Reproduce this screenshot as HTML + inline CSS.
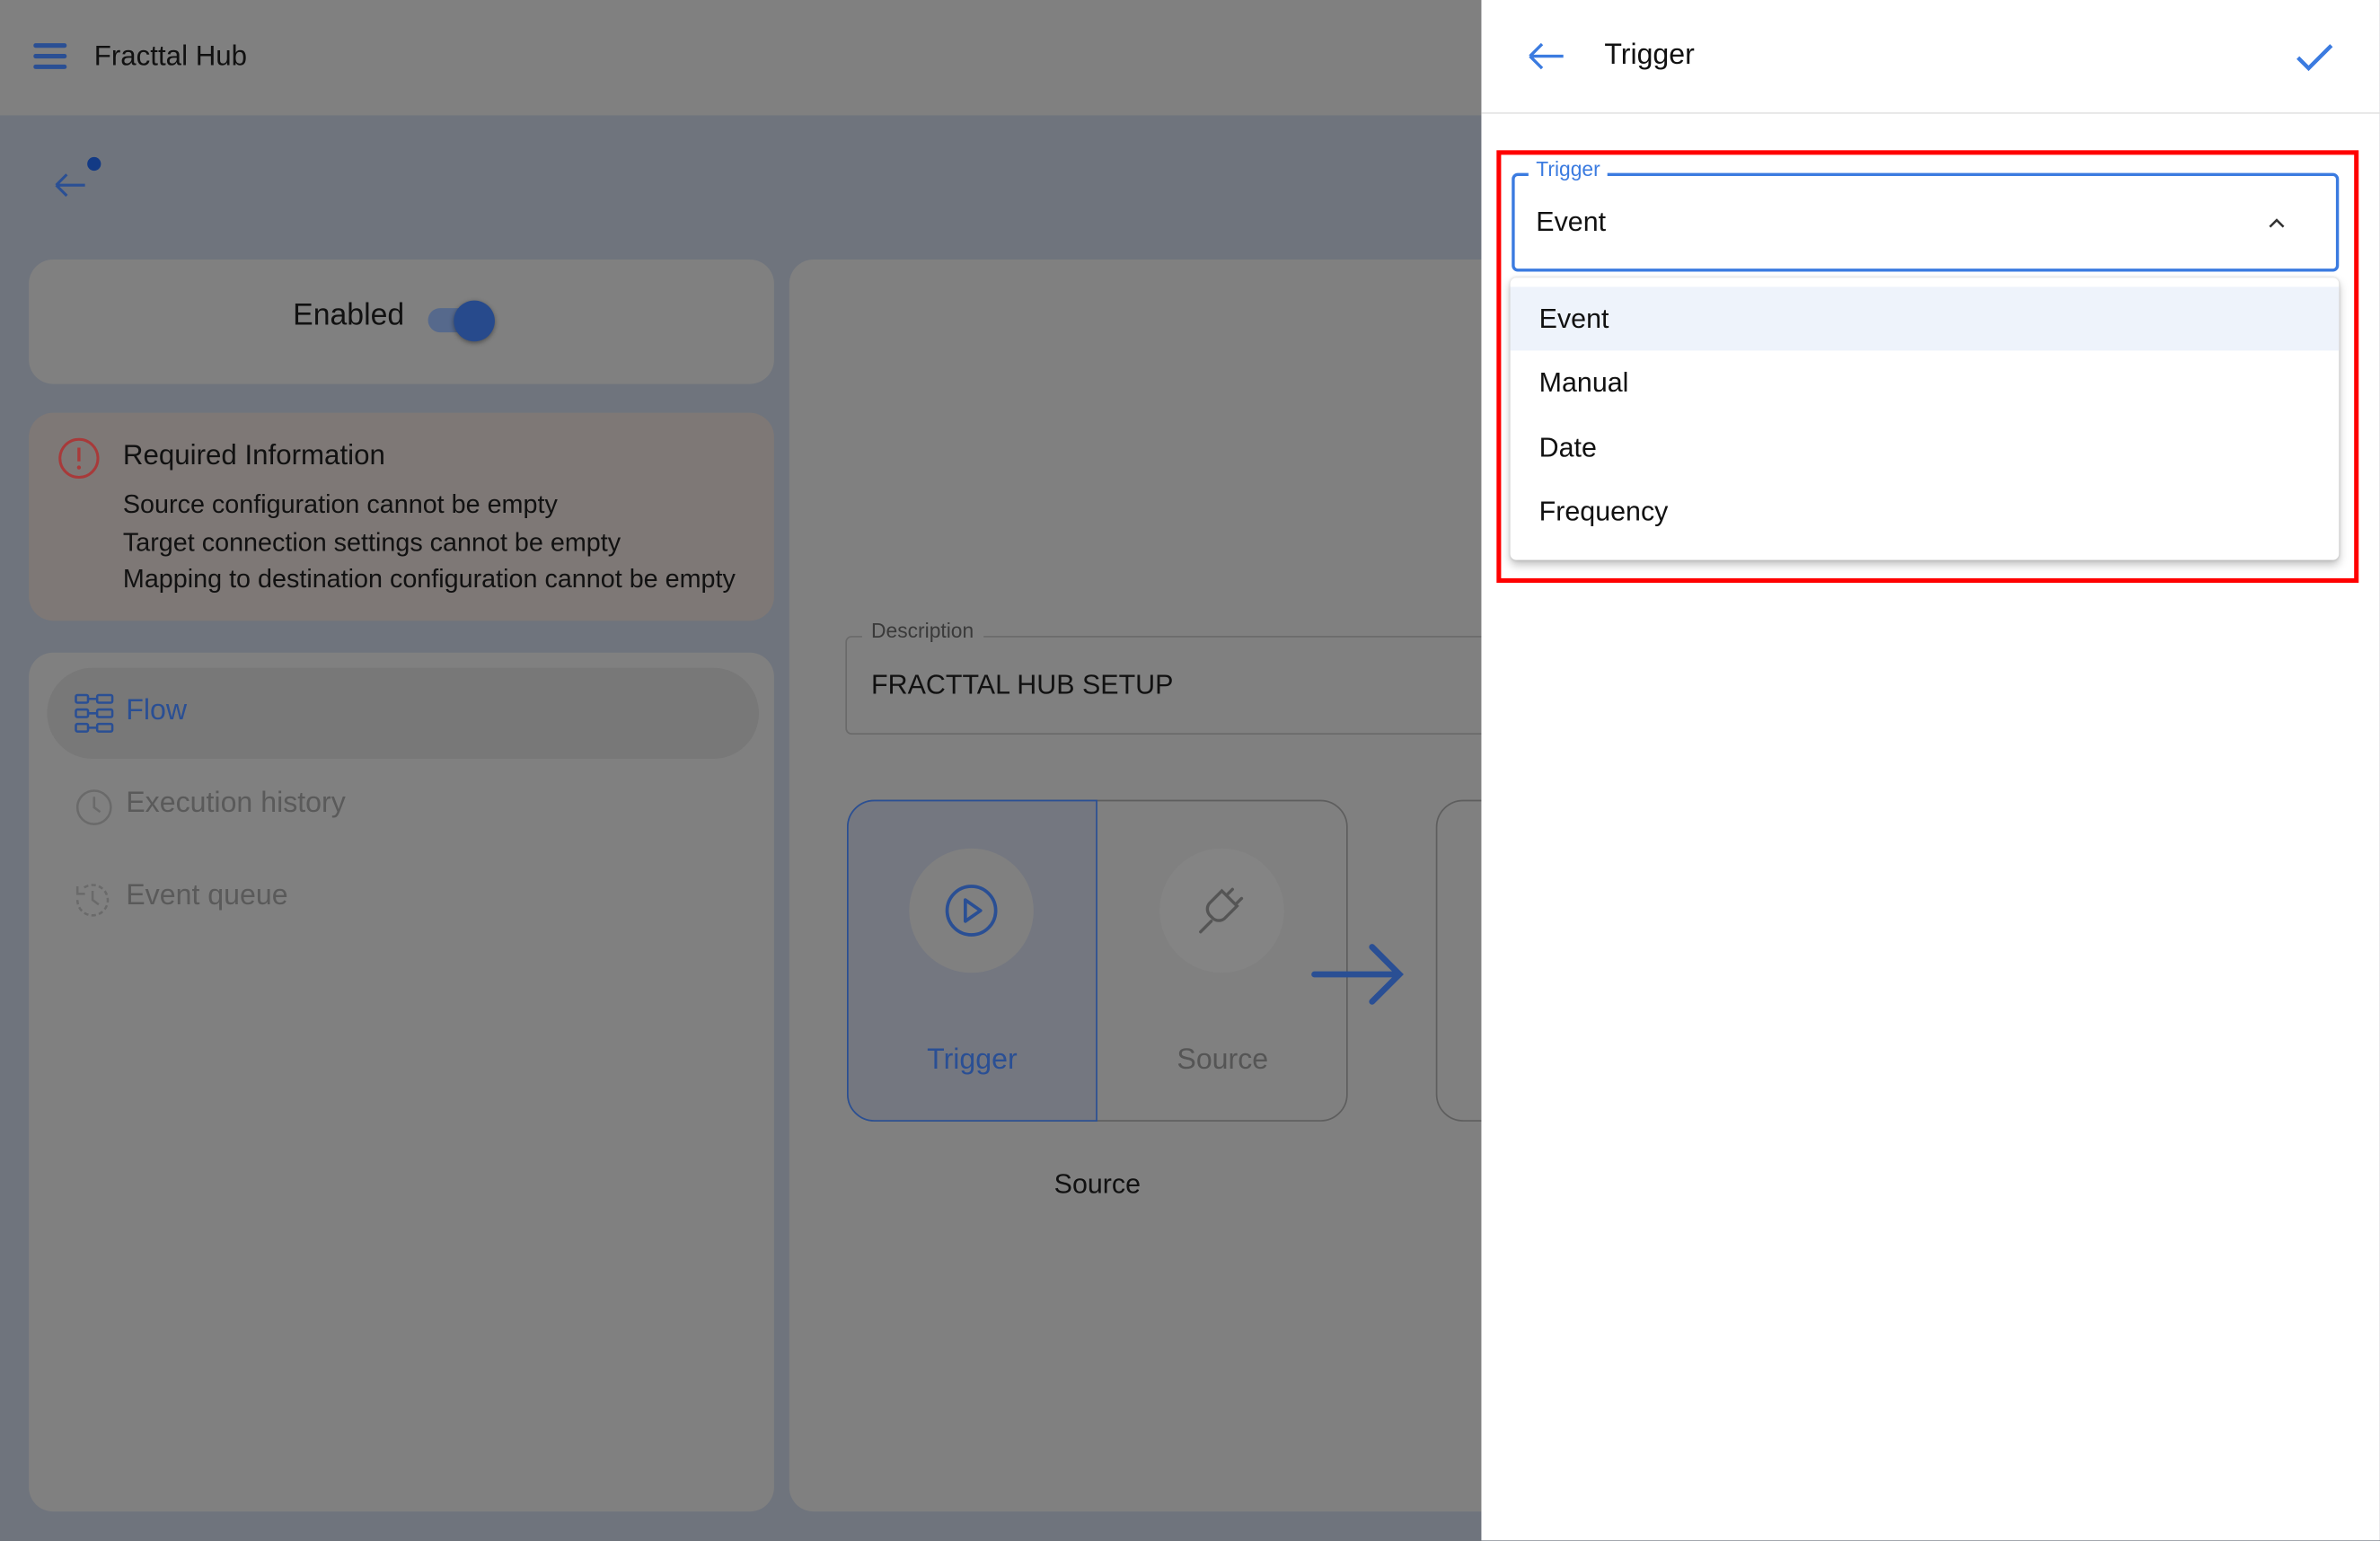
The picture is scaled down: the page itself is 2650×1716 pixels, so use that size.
<!DOCTYPE html>
<html><head><meta charset="utf-8">
<style>
*{box-sizing:border-box;margin:0;padding:0}
html,body{width:2650px;height:1716px;overflow:hidden;background:#6f747d;font-family:"Liberation Sans",sans-serif}
#w{position:absolute;left:0;top:0;width:1568px;height:1015.4px;transform:scale(1.69);transform-origin:0 0;background:#6f747d;overflow:hidden}
.a{position:absolute}
.card{position:absolute;background:#808080;border-radius:16px}
.t{color:#111;font-size:18.5px}
.opt{position:absolute;left:0;right:0;height:42px;line-height:42px;padding-left:19px;font-size:18px;color:#111}
</style></head><body><div id="w">
<div class="a" style="left:0;top:0;width:976px;height:76px;background:#808080"></div>
<svg class="a" style="left:22px;top:28px" width="22" height="18"><g stroke="#2a4f94" stroke-width="3" stroke-linecap="round"><line x1="1.5" y1="2" x2="20.5" y2="2"/><line x1="1.5" y1="9" x2="20.5" y2="9"/><line x1="1.5" y1="16" x2="20.5" y2="16"/></g></svg>
<div class="a t" style="left:62px;top:26px">Fracttal Hub</div>
<svg class="a" style="left:34px;top:100px" width="36" height="36"><path d="M3 22 H22 M3 22 L10 15 M3 22 L10 29" stroke="#2a4f94" stroke-width="1.8" fill="none"/><circle cx="28" cy="8" r="4.5" fill="#133a85"/></svg>
<div class="card" style="left:19px;top:171px;width:491px;height:82px"></div>
<div class="a" style="left:193px;top:197px;font-size:20px;color:#111">Enabled</div>
<div class="a" style="left:282px;top:203px;width:40px;height:16px;border-radius:8px;background:#56698c"></div>
<div class="a" style="left:299px;top:198px;width:27px;height:27px;border-radius:50%;background:#274a8c;box-shadow:0 1px 3px rgba(0,0,0,.4)"></div>
<div class="card" style="left:19px;top:272px;width:491px;height:137px;background:#7e7876"></div>
<svg class="a" style="left:38px;top:288px" width="28" height="28"><circle cx="14" cy="14" r="12.5" stroke="#a83a3a" stroke-width="1.8" fill="none"/><line x1="14" y1="7" x2="14" y2="16" stroke="#a83a3a" stroke-width="2"/><circle cx="14" cy="20" r="1.3" fill="#a83a3a"/></svg>
<div class="a" style="left:81px;top:289px;font-size:18.5px;color:#111">Required Information</div>
<div class="a" style="left:81px;top:321px;font-size:17px;color:#111;line-height:24.5px">Source configuration cannot be empty<br>Target connection settings cannot be empty<br>Mapping to destination configuration cannot be empty</div>
<div class="card" style="left:19px;top:430px;width:491px;height:566px"></div>
<div class="a" style="left:31px;top:440px;width:469px;height:60px;border-radius:30px;background:#787878"></div>
<svg class="a" style="left:49px;top:457px" width="26" height="26" fill="none" stroke="#2a4f94" stroke-width="1.5"><rect x="1" y="1" width="8" height="5" rx="1"/><rect x="1" y="10.5" width="8" height="5" rx="1"/><rect x="1" y="20" width="8" height="5" rx="1"/><rect x="15" y="1" width="10" height="5" rx="1"/><rect x="15" y="10.5" width="10" height="5" rx="1"/><rect x="15" y="20" width="10" height="5" rx="1"/><path d="M9 3.5h6M9 13h6M9 22.5h6"/></svg>
<div class="a" style="left:83px;top:458px;font-size:19px;color:#2a4f94">Flow</div>
<svg class="a" style="left:49px;top:519px" width="26" height="26" fill="none" stroke="#6a6a6a" stroke-width="1.5"><circle cx="13" cy="13" r="11"/><path d="M13 6v7l4 3"/></svg>
<div class="a" style="left:83px;top:519px;font-size:19px;color:#5a5a5a">Execution history</div>
<svg class="a" style="left:47px;top:579px" width="28" height="28" fill="none" stroke="#6a6a6a" stroke-width="1.5"><path d="M4 14a10 10 0 1 0 3-7" stroke-dasharray="3 2"/><path d="M4 5v5h5M14 8v6l4 3"/></svg>
<div class="a" style="left:83px;top:580px;font-size:19px;color:#5a5a5a">Event queue</div>
<div class="card" style="left:520px;top:171px;width:480px;height:825px"></div>
<div class="a" style="left:557px;top:419px;width:440px;height:65px;border:1px solid #6a6a6a;border-radius:4px"></div>
<div class="a" style="left:568px;top:408px;background:#808080;padding:0 6px;font-size:13.5px;color:#3a3a3a">Description</div>
<div class="a" style="left:574px;top:441px;font-size:18px;color:#111">FRACTTAL HUB SETUP</div>
<div class="a" style="left:558px;top:527px;width:330px;height:212px;border:1px solid #5e5e5e;border-radius:18px"></div>
<div class="a" style="left:558px;top:527px;width:165px;height:212px;border:1px solid #2a4f94;border-radius:18px 0 0 18px;background:#747780"></div>
<div class="a" style="left:599px;top:559px;width:82px;height:82px;border-radius:50%;background:#808080"></div>
<svg class="a" style="left:622px;top:582px" width="36" height="36" fill="none" stroke="#2a4f94" stroke-width="2.2"><circle cx="18" cy="18" r="16"/><path d="M14 11l10 7-10 7z" stroke-linejoin="round"/></svg>
<div class="a" style="left:558px;top:688px;width:165px;text-align:center;font-size:19px;color:#2a4f94">Trigger</div>
<div class="a" style="left:764px;top:559px;width:82px;height:82px;border-radius:50%;background:#848484"></div>
<svg class="a" style="left:788px;top:582px" width="36" height="36" fill="none" stroke="#555" stroke-width="2" stroke-linecap="round"><path d="M3 32l7-7M9 13l8-8 10 10-8 8a6 6 0 0 1-8 0l-2-2a6 6 0 0 1 0-8zM20 8l4-4M26 14l4-4"/></svg>
<div class="a" style="left:723px;top:688px;width:165px;text-align:center;font-size:19px;color:#555">Source</div>
<svg class="a" style="left:862px;top:618px" width="66" height="50" fill="none" stroke="#2a4f94" stroke-width="4" stroke-linecap="round"><path d="M4 24h56M42 6l18 18-18 18"/></svg>
<div class="a" style="left:946px;top:527px;width:60px;height:212px;border:1px solid #5e5e5e;border-radius:18px"></div>
<div class="a" style="left:558px;top:770px;width:330px;text-align:center;font-size:18px;color:#111">Source</div>
<div class="a" style="left:976px;top:0;width:592px;height:1016px;background:#fff"></div>
<div class="a" style="left:976px;top:74px;width:592px;height:1px;background:#e4e4e4"></div>
<svg class="a" style="left:1005px;top:25px" width="28" height="24" fill="none" stroke="#3b7be0" stroke-width="2"><path d="M3 12h22M3 12l8-8M3 12l8 8"/></svg>
<div class="a" style="left:1057px;top:26px;font-size:19px;color:#111">Trigger</div>
<svg class="a" style="left:1511px;top:26px" width="28" height="24" fill="none" stroke="#3b7be0" stroke-width="2.6"><path d="M3 12l7 7L25 4"/></svg>
<div class="a" style="left:986px;top:99px;width:568px;height:285px;border:3px solid #f00"></div>
<div class="a" style="left:996px;top:114px;width:545px;height:65px;border:2px solid #3b7be0;border-radius:4px"></div>
<div class="a" style="left:1007px;top:104px;background:#fff;padding:0 5px;font-size:13.5px;color:#3b7be0">Trigger</div>
<div class="a" style="left:1012px;top:136px;font-size:18px;color:#111">Event</div>
<svg class="a" style="left:1494px;top:142px" width="12" height="10" fill="none" stroke="#333" stroke-width="1.5"><path d="M1.5 7.5L6 3l4.5 4.5"/></svg>
<div class="a" style="left:995px;top:183px;width:546px;height:186px;background:#fff;border-radius:4px;box-shadow:0 3px 6px rgba(0,0,0,.25),0 0 2px rgba(0,0,0,.15)">
<div class="opt" style="top:6px;background:#eef3fb">Event</div>
<div class="opt" style="top:48px">Manual</div>
<div class="opt" style="top:91px">Date</div>
<div class="opt" style="top:133px">Frequency</div>
</div>
</div></body></html>
